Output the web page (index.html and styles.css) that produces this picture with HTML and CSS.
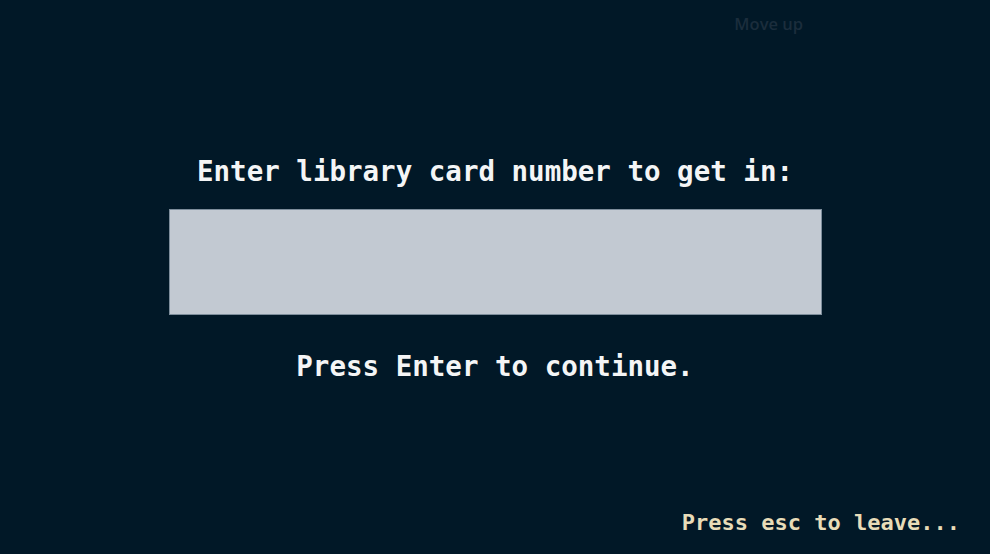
FILE: index.html
```html
<!DOCTYPE html>
<html lang="en">
<head>
<meta charset="utf-8">
<title>Library</title>
<link rel="stylesheet" href="styles.css">
</head>
<body>
<div class="screen">
  <div class="topbar"><span class="move-up">Move up</span></div>
  <div class="main">
    <div class="title">Enter library card number to get in:</div>
    <div class="card-input"></div>
    <div class="hint">Press Enter to continue.</div>
  </div>
  <div class="footer">Press esc to leave...</div>
</div>
</body>
</html>
```
FILE: styles.css
```css
html, body {
  margin: 0;
  padding: 0;
  background: #011827;
}
.screen {
  height: 554px;
  display: flex;
  flex-direction: column;
  font-family: "DejaVu Sans Mono", "Liberation Mono", monospace;
  font-weight: bold;
  color: #f4f5f6;
}
.topbar {
  height: 46px;
  padding-bottom: 2px;
  display: flex;
  justify-content: flex-end;
  align-items: center;
  padding-right: 187px;
}
.move-up {
  font-family: "Open Sans", "Liberation Sans", sans-serif;
  font-weight: 600;
  font-size: 16.5px;
  color: #1b2d3c;
}
.main {
  display: flex;
  flex-direction: column;
  align-items: center;
  padding-top: 107px;
}
.title, .hint {
  font-size: 27.5px;
  line-height: 32px;
  white-space: pre;
}
.card-input {
  box-sizing: border-box;
  width: 653px;
  height: 106px;
  margin-top: 22px;
  background: #c2c9d2;
  border: 1px solid #7d8d9b;
}
.hint {
  margin-top: 35px;
}
.footer {
  margin-top: auto;
  padding: 0 30px 18px 0;
  text-align: right;
  font-size: 22px;
  line-height: 26px;
  color: #e8dcb8;
}
```
